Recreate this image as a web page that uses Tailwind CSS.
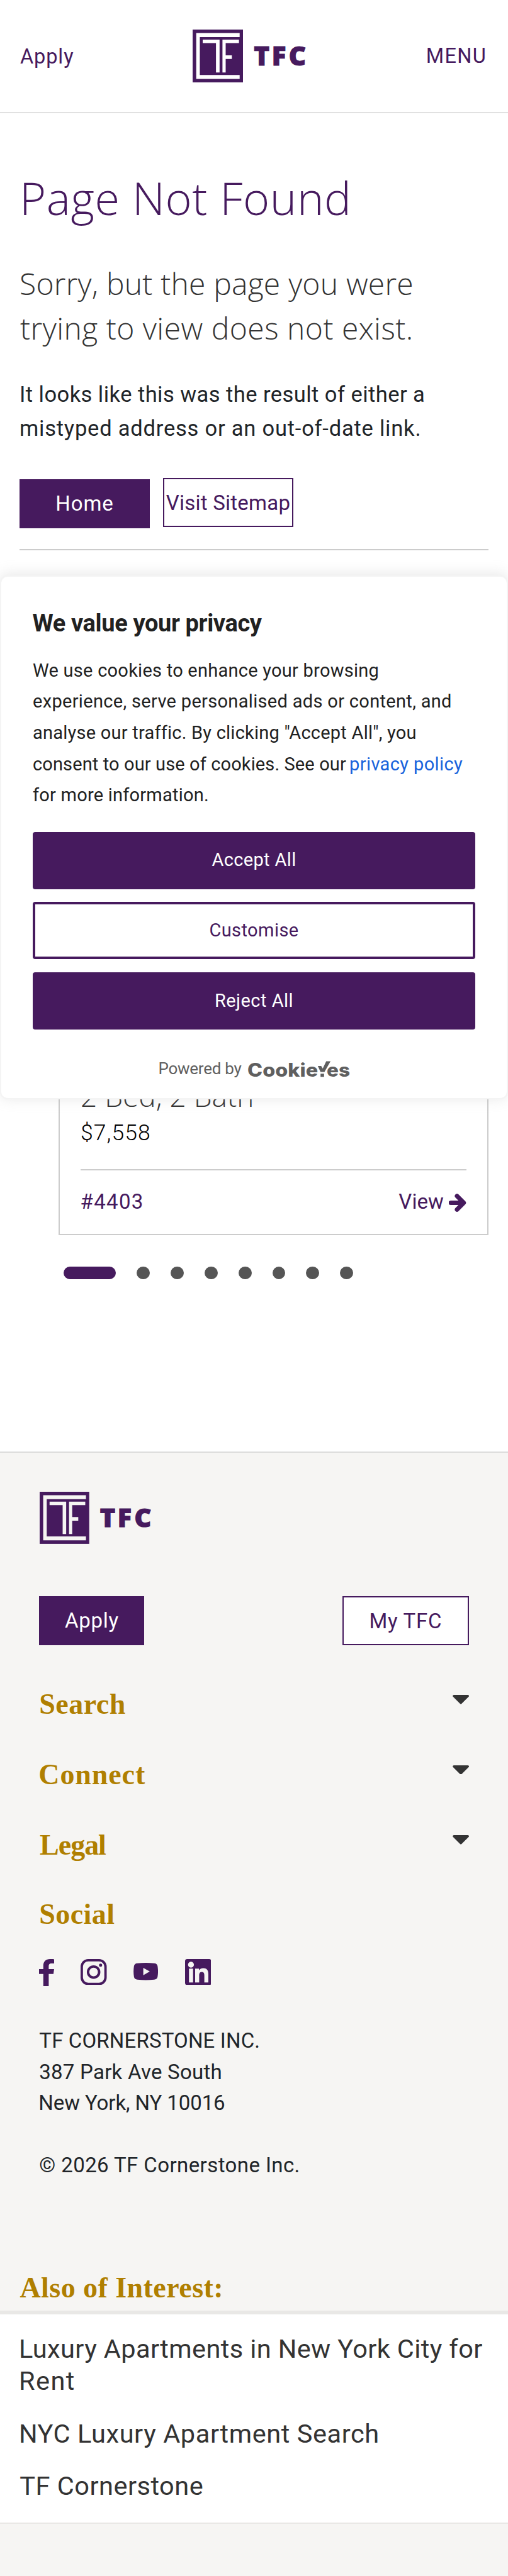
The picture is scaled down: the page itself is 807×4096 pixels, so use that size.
<!DOCTYPE html>
<html lang="en">
<head>
<meta charset="utf-8">
<title>Page Not Found | TFC</title>
<script src="https://cdn.jsdelivr.net/npm/@tailwindcss/browser@4"></script>
</head>
<body class="relative w-[807px] h-[4096px] overflow-x-hidden bg-white font-[Roboto,sans-serif] text-[#212529]">

<header class="flex h-[180px] items-center border-b-2 border-[#e1e1e1] pl-8 pr-[34px] text-[32.5px] leading-10 text-[#461a5e]">
  <a class="w-[274.2px] pt-[2px] tracking-[0.89px]">Apply</a>
  <svg class="h-[84.2px] w-[180px] text-white" viewBox="0 0 180 84.2">
    <rect width="80" height="84.2" fill="#461a5e"/>
    <path fill="currentColor" d="M5.7 5.5H74.7V12H11.4V72.2H74.7V78.5H5.7Z"/>
    <path fill="currentColor" d="M16 16.1H42.8V68.2H37.1V21.6H16Z"/>
    <path fill="currentColor" d="M47.4 16.1H73.6V21.6H52.5V41H62.3V46.8H52.5V68.2H47.4Z"/>
    <g fill="#461a5e" stroke="#461a5e" stroke-width="1.2" font-family="Open Sans" font-weight="800" font-size="42">
      <text x="97.2" y="56.9">T</text><text x="125.8" y="56.9">F</text><text x="152.8" y="56.9">C</text>
    </g>
  </svg>
  <a class="ml-auto pb-[1px] tracking-[1.27px]">MENU</a>
</header>

<main class="pl-[31px] pr-[31px]">
  <h1 class="mt-[90.6px] font-['Open_Sans'] text-[72px] font-light leading-[86px] tracking-[0.6px] text-[#461a5e]">Page Not Found</h1>
  <h2 class="mt-[59.6px] whitespace-nowrap font-['Open_Sans'] text-[48px] font-light leading-[70.4px] text-[#333]"><span class="tracking-[0.21px]">Sorry, but the page you were</span><br><span class="ml-px tracking-[0.48px]">trying to view does not exist.</span></h2>
  <p class="mt-[44.2px] whitespace-nowrap text-[34.5px] leading-[53.6px]"><span class="tracking-[0.45px]">It looks like this was the result of either a</span><br><span class="tracking-[0.78px]">mistyped address or an out-of-date link.</span></p>
  <div class="mt-[51.2px] flex items-start gap-[21px] text-[33px] leading-10">
    <a class="mt-[2px] flex h-[78.4px] w-[207px] items-center justify-center bg-[#461a5e] tracking-[0.93px] text-white">Home</a>
    <a class="flex h-[78.4px] w-[207px] items-center justify-center border-2 border-[#461a5e] pt-[3px] tracking-[0.23px] text-[#461a5e]">Visit Sitemap</a>
  </div>
  <hr class="mt-[33px] h-[2px] border-0 bg-[#ccc]">

  <!-- Availability card -->
  <article class="ml-[62px] mt-[65px] flex h-[1024px] flex-col justify-end border-2 border-[#ccc] pb-[25.7px] pl-[33px] pr-[33px]">
    <h3 class="whitespace-nowrap font-['Open_Sans'] text-[46px] font-light leading-[60px] text-[#333]">2 Bed, 2 Bath</h3>
    <p class="mt-[4.3px] text-[35.5px] font-light leading-[50px] tracking-[1.08px] text-black">$7,558</p>
    <div class="mt-[32.6px] h-[2px] bg-[#ccc]"></div>
    <div class="mt-[25.7px] flex items-center text-[33px] leading-[50px] text-[#461a5e]">
      <span class="ml-[-0.5px] tracking-[1.35px]">#4403</span>
      <span class="ml-auto tracking-[0.08px]">View</span>
      <svg class="ml-2 mt-[2px] h-[29px] w-[28px]" viewBox="0 0 28 29" fill="none" stroke="currentColor"><path d="M3.2 14.5H20" stroke-width="7.2" stroke-linecap="round"/><path d="M13 3.8L23.7 14.5L13 25.2" stroke-width="7" stroke-linecap="round" stroke-linejoin="round"/></svg>
    </div>
  </article>

  <div class="ml-[70.4px] mt-[49.8px] flex gap-[33.1px]">
    <span class="h-[20.7px] w-[83px] rounded-full bg-[#461a5e]"></span>
    <span class="size-[20.7px] rounded-full bg-[#555]"></span>
    <span class="size-[20.7px] rounded-full bg-[#555]"></span>
    <span class="size-[20.7px] rounded-full bg-[#555]"></span>
    <span class="size-[20.7px] rounded-full bg-[#555]"></span>
    <span class="size-[20.7px] rounded-full bg-[#555]"></span>
    <span class="size-[20.7px] rounded-full bg-[#555]"></span>
    <span class="size-[20.7px] rounded-full bg-[#555]"></span>
  </div>
</main>

<footer class="mt-[273.4px] border-t-2 border-[#dcdcdc] bg-[#f6f5f3]">
  <div class="px-[62.3px]">
    <svg class="ml-[0.5px] mt-[62.2px] block h-[82.9px] w-[177.2px] text-[#f6f5f3]" viewBox="0 0 180 84.2">
      <rect width="80" height="84.2" fill="#461a5e"/>
      <path fill="currentColor" d="M5.7 5.5H74.7V12H11.4V72.2H74.7V78.5H5.7Z"/>
      <path fill="currentColor" d="M16 16.1H42.8V68.2H37.1V21.6H16Z"/>
      <path fill="currentColor" d="M47.4 16.1H73.6V21.6H52.5V41H62.3V46.8H52.5V68.2H47.4Z"/>
      <g fill="#461a5e" stroke="#461a5e" stroke-width="1.2" font-family="Open Sans" font-weight="800" font-size="42">
        <text x="97.2" y="56.9">T</text><text x="125.8" y="56.9">F</text><text x="152.8" y="56.9">C</text>
      </g>
    </svg>
    <div class="mt-[82.7px] flex justify-between text-[33px] leading-10">
      <a class="flex h-[78.4px] w-[167.2px] items-center justify-center bg-[#461a5e] tracking-[0.7px] text-white">Apply</a>
      <a class="flex h-[78.4px] w-[200.7px] items-center justify-center border-2 border-[#461a5e] bg-white pt-[3px] tracking-[0.73px] text-[#461a5e]">My TFC</a>
    </div>

    <nav class="mt-[64.4px] flex flex-col gap-[51.8px] font-['Liberation_Serif'] text-[46px] font-bold leading-[60px] text-[#b07f00]">
      <div class="flex justify-between"><span class="tracking-[0.48px]">Search</span><svg class="mt-[14.5px] h-[14.7px] w-[26.2px]" viewBox="0 0 26.2 14.7" fill="#333"><path d="M1.8 0H24.4Q27 .8 25.6 2.8L14.3 14Q13.1 15.2 11.9 14L.6 2.8Q-.8.8 1.8 0Z"/></svg></div>
      <div class="flex justify-between"><span class="ml-[-1px] tracking-[0.9px]">Connect</span><svg class="mt-[14.5px] h-[14.7px] w-[26.2px]" viewBox="0 0 26.2 14.7" fill="#333"><path d="M1.8 0H24.4Q27 .8 25.6 2.8L14.3 14Q13.1 15.2 11.9 14L.6 2.8Q-.8.8 1.8 0Z"/></svg></div>
      <div class="flex justify-between"><span class="ml-[0.8px] tracking-[-1.02px]">Legal</span><svg class="mt-[14.5px] h-[14.7px] w-[26.2px]" viewBox="0 0 26.2 14.7" fill="#333"><path d="M1.8 0H24.4Q27 .8 25.6 2.8L14.3 14Q13.1 15.2 11.9 14L.6 2.8Q-.8.8 1.8 0Z"/></svg></div>
    </nav>
    <h4 class="mt-[49.6px] font-['Liberation_Serif'] text-[46px] font-bold leading-[60px] tracking-[0.41px] text-[#b07f00]">Social</h4>

    <div class="mt-[41.4px] flex items-start text-[#461a5e]">
      <svg class="h-[43.3px] w-[24.2px]" viewBox="0 0 24.2 43.3" fill="currentColor"><path d="M24.2.3V7.1H20.2C16.2 7.1 15.4 9 15.4 11.8V16H24L22.9 23.7H15.4V43.3H6.8V23.7H0V16H6.8V10.6C6.8 3.8 11 0 17.4 0 20.4 0 23.2.2 24.2.3Z"/></svg>
      <svg class="ml-[41.7px] size-[41.5px]" viewBox="0 0 41.5 41.5" fill="none" stroke="currentColor"><rect x="1.9" y="1.9" width="37.7" height="37.7" rx="10.3" stroke-width="3.8"/><circle cx="20.7" cy="20.7" r="8.8" stroke-width="3.9"/><circle cx="31.8" cy="9.7" r="2.5" fill="currentColor" stroke="none"/></svg>
      <svg class="ml-[42.2px] mt-[6.5px] h-[27.6px] w-[39.2px]" viewBox="0 0 39.2 27.6"><path fill="currentColor" d="M6.2.8Q19.6-.6 33 .8 37.4 1.1 38.3 5 39.8 13.8 38.3 22.6 37.4 26.5 33 26.8 19.6 28.2 6.2 26.8 1.8 26.5.9 22.6-.6 13.8.9 5 1.8 1.1 6.2.8Z"/><path fill="#f6f5f3" d="M15.6 7.9L25.9 13.8L15.6 19.7Z"/></svg>
      <svg class="ml-[42.7px] size-[41.5px]" viewBox="0 0 41.5 41.5"><rect width="41.5" height="41.5" rx="3.4" fill="currentColor"/><g fill="#f6f5f3"><circle cx="9.4" cy="9" r="4.7"/><path d="M6.2 15.3H12.7V37.2H6.2ZM16 15.3H22.1V18.1C23.2 16.2 25.6 14.6 29 14.6 35.5 14.6 37 18.9 37 24.8V37.2H30.6V26.3C30.6 23.5 30.3 20.4 26.7 20.4 23 20.4 22.4 23.4 22.4 26.2V37.2H16Z"/></g></svg>
    </div>

    <address class="mt-[61.6px] whitespace-nowrap text-[33px] not-italic leading-[49.65px]">
      <span class="tracking-[0.15px]">TF CORNERSTONE INC.</span><br><span class="tracking-[0.24px]">387 Park Ave South</span><br><span class="-ml-px tracking-[-0.1px]">New York, NY 10016</span><br><br><span class="tracking-[0.41px]">© 2026 TF Cornerstone Inc.</span>
    </address>
  </div>

  <h4 class="mt-[139.5px] pl-[31.4px] font-['Liberation_Serif'] text-[46px] font-bold leading-[60px] tracking-[0.45px] text-[#b07f00]">Also of Interest:</h4>
  <div class="mt-[6.2px] border-t-[6px] border-b-2 border-[#e9e8e6] bg-white pb-[33px] pl-[30px] pt-[29.1px] text-[41.5px] leading-[51.4px] whitespace-nowrap text-[#333]">
    <p><span class="tracking-[0.38px]">Luxury Apartments in New York City for</span><br><span class="tracking-[1.4px]">Rent</span></p>
    <p class="mt-[31.8px] tracking-[0.58px]">NYC Luxury Apartment Search</p>
    <p class="ml-[1.3px] mt-[31.9px] tracking-[0.5px]">TF Cornerstone</p>
  </div>
  <div class="h-[83px]"></div>
</footer>

<!-- Cookie consent dialog, floating over the page -->
<section class="absolute left-0 top-[915px] h-[833px] w-[807px] rounded-[12px] border-2 border-[#f4f4f4] bg-white px-[50px] text-[#212121] shadow-[0_-2px_21px_0_#acabab4d]">
  <h5 class="ml-[-0.6px] mt-[48.5px] text-[38px] font-bold leading-[50px] tracking-[-0.36px]">We value your privacy</h5>
  <p class="mt-[26.2px] whitespace-nowrap text-[29px] leading-[49.65px]"><span class="tracking-[0.25px]">We use cookies to enhance your browsing</span><br><span class="tracking-[0.32px]">experience, serve personalised ads or content, and</span><br><span class="tracking-[0.23px]">analyse our traffic. By clicking "Accept All", you</span><br><span class="tracking-[0.12px]">consent to our use of cookies. See our</span> <a class="-ml-[2px] tracking-[0.38px] text-[#1863dc]">privacy policy</a><br><span class="tracking-[0.22px]">for more information.</span></p>
  <div class="mt-[32.6px] flex flex-col gap-[20.5px] text-center text-[29px]">
    <button class="h-[91.2px] rounded-[4px] bg-[#461a5e] tracking-[0.36px] text-white">Accept All</button>
    <button class="h-[91.2px] rounded-[4px] border-4 border-[#461a5e] bg-white tracking-[0.42px] text-[#461a5e]">Customise</button>
    <button class="h-[91.2px] rounded-[4px] bg-[#461a5e] tracking-[0.48px] text-white">Reject All</button>
  </div>
  <div class="mt-[41.7px] flex items-center justify-center text-[26px] leading-10 text-[#5f5f5f]">
    <span class="tracking-[-0.25px]">Powered by</span>
    <svg class="ml-[10px] mt-[3px] h-[26px] w-[162px] overflow-visible" viewBox="0 0 162 26" fill="currentColor">
      <g font-family="Inter" font-weight="800" font-size="29.5"><text x="-0.9" y="25.3" textLength="112" lengthAdjust="spacingAndGlyphs">Cookie</text><text x="125" y="25.3" textLength="37" lengthAdjust="spacingAndGlyphs">es</text></g>
      <path d="M110.9 8H116.2L118.7 12L124.2.5H131.1L121.4 17.5H115.2ZM115.2 20.2H120.8V25.3H115.2Z"/>
    </svg>
  </div>
</section>
</body>
</html>
